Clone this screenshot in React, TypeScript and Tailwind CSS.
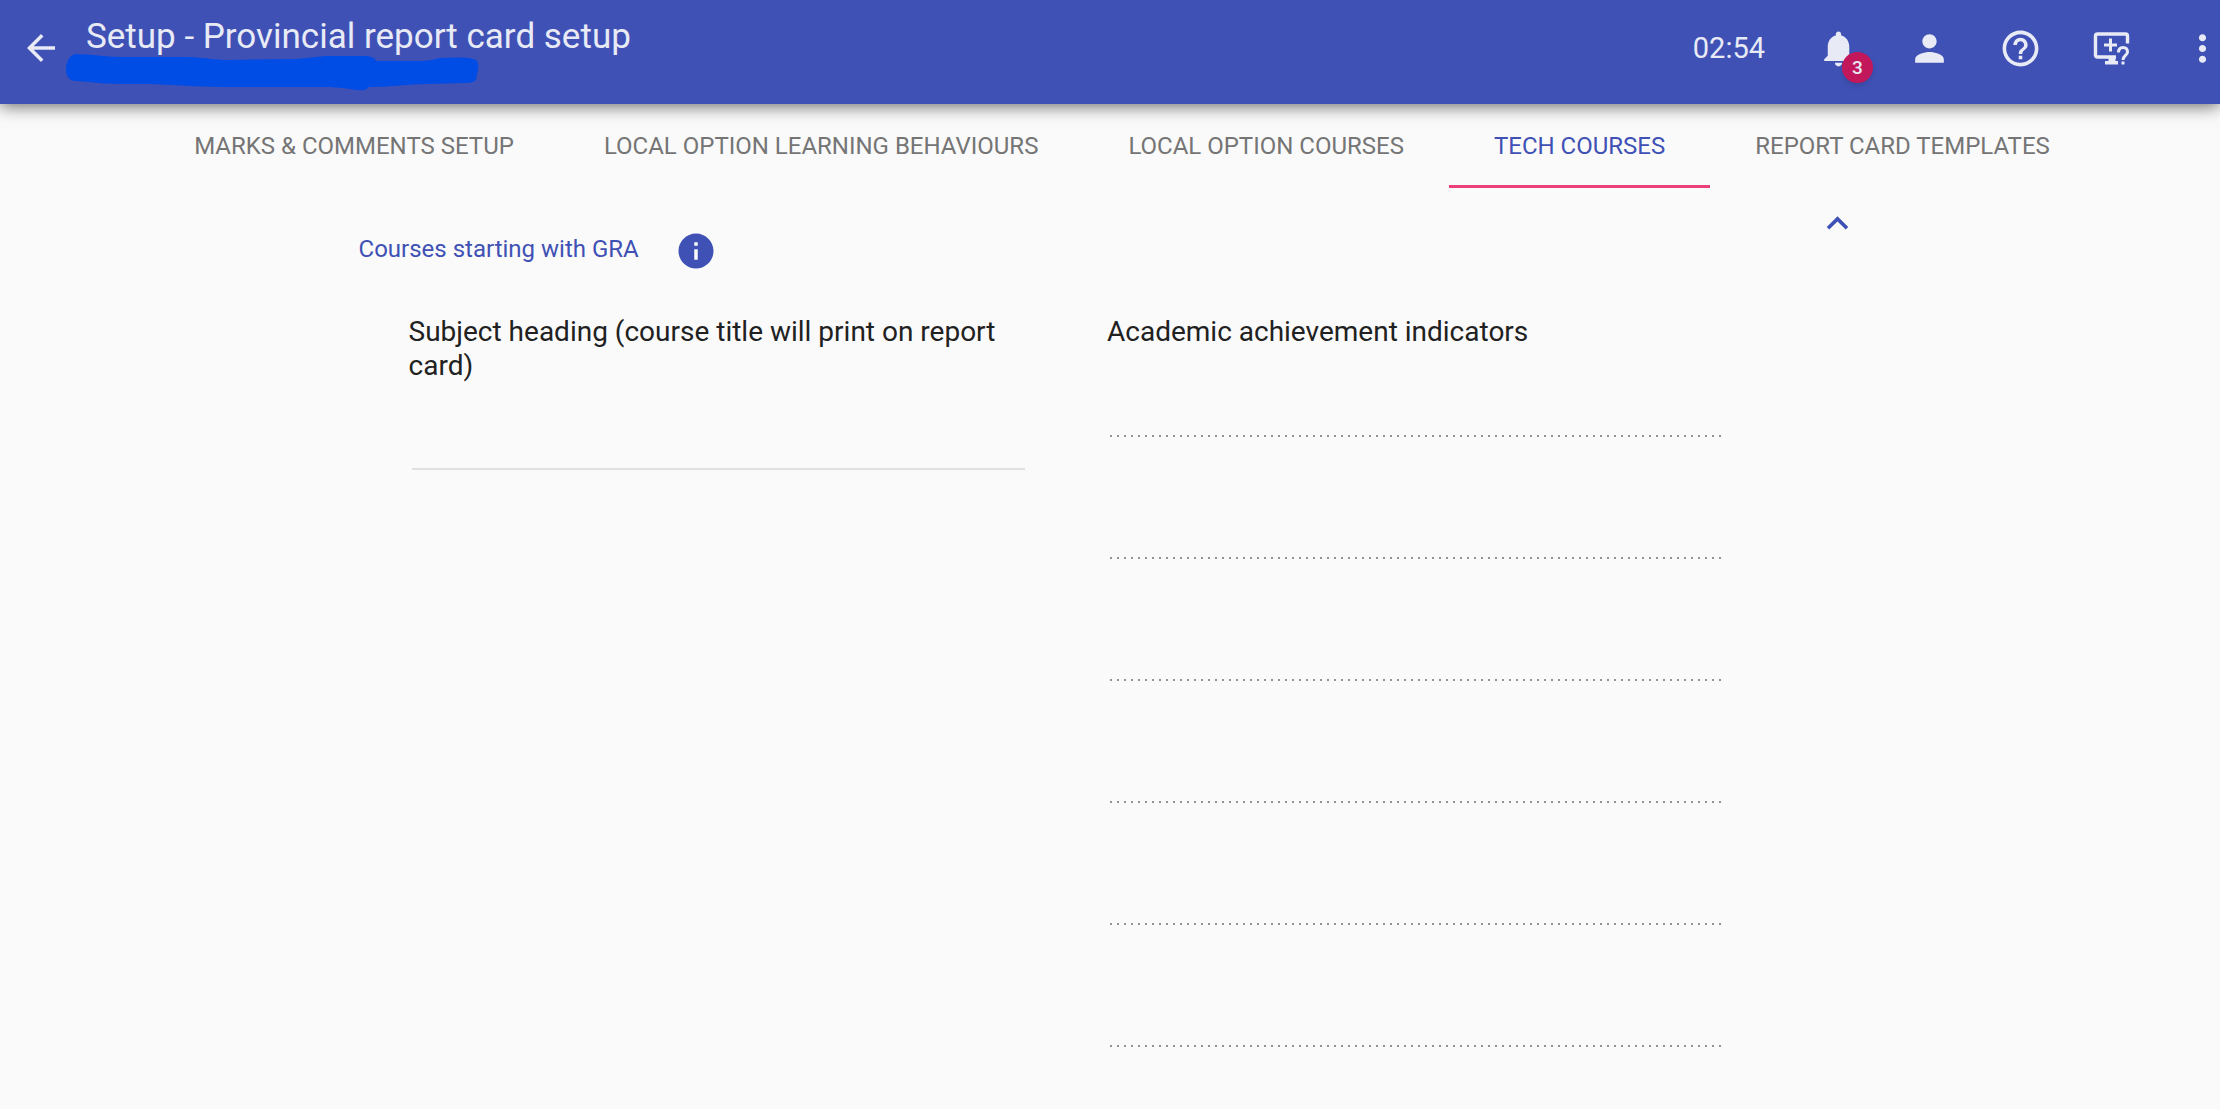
import type { ReactNode } from "react";

function Icon({ children, className }: { children: ReactNode; className: string }) {
  return (
    <svg viewBox="0 0 24 24" fill="currentColor" aria-hidden="true" className={className}>
      {children}
    </svg>
  );
}

const tabs = [
  "Marks & Comments Setup",
  "Local Option Learning Behaviours",
  "Local Option Courses",
  "Tech Courses",
  "Report Card Templates",
];

const indicators = [1, 2, 3, 4, 5, 6];

export default function App() {
  return (
    <div className="h-screen overflow-hidden bg-[#fafafa] font-[Roboto,sans-serif] text-[#212121]">
      <header className="relative flex h-[104px] items-center bg-[#3f51b5] pb-[8px] pl-[20px] text-[#e8eaf6] shadow-[0_2px_16px_rgba(0,0,0,0.6)]">
        <button type="button" aria-label="Back" className="shrink-0">
          <Icon className="size-[42px]">
            <path d="M20 11H7.83l5.59-5.59L12 4l-8 8 8 8 1.41-1.41L7.83 13H20v-2z" />
          </Icon>
        </button>
        <div className="relative ml-6 h-[96px] flex-1 pt-[15px]">
          <h1 className="text-[35px] leading-[44px] font-normal">Setup - Provincial report card setup</h1>
          <svg viewBox="66 52 414 40" className="absolute top-[52px] left-[-20px] h-[40px] w-[414px]" aria-hidden="true">
            <path
              fill="#004de6"
              d="M76 54C68 55 66 64 66 70C66 77 70 81 76 81L90 82C105 84 120 84 140 84C170 84 190 87 225 87L330 87C345 88 350 89 357 90C363 91 368 89 369 87C395 87 405 84 430 84L465 83C474 83 477 81 477 74C479 68 479 63 476 60C472 57 455 57 440 58C432 60 428 61 420 61L376 61C375 57 370 56 362 56L325 56C310 57 305 59 290 59L225 60C205 59 200 57 185 57L120 57C105 57 92 54 76 54Z"
            />
          </svg>
        </div>
        <div className="flex shrink-0 items-center">
          <time className="mr-[52px] text-[29px] leading-[36px]">02:54</time>
          <button type="button" aria-label="Notifications, 3 unread" className="relative mr-[48px]">
            <Icon className="size-[43px]">
              <path d="M12 22c1.1 0 2-.9 2-2h-4c0 1.1.89 2 2 2zm6-6v-5c0-3.07-1.64-5.64-4.5-6.32V4c0-.83-.67-1.5-1.5-1.5s-1.5.67-1.5 1.5v.68C7.63 5.36 6 7.92 6 11v5l-2 2v1h16v-1l-2-2z" />
            </Icon>
            <span className="absolute top-[25px] left-[25px] grid size-[31px] place-items-center rounded-full bg-[#c2185b] text-[19px] leading-none font-medium shadow-md">
              3
            </span>
          </button>
          <button type="button" aria-label="Account" className="mr-[48px]">
            <Icon className="size-[43px]">
              <path d="M12 12c2.21 0 4-1.79 4-4s-1.79-4-4-4-4 1.79-4 4 1.79 4 4 4zm0 2c-2.67 0-8 1.34-8 4v2h16v-2c0-2.66-5.33-4-8-4z" />
            </Icon>
          </button>
          <button type="button" aria-label="Help" className="mr-[48px]">
            <Icon className="size-[43px]">
              <path d="M11 18h2v-2h-2v2zm1-16C6.48 2 2 6.48 2 12s4.48 10 10 10 10-4.48 10-10S17.52 2 12 2zm0 18c-4.41 0-8-3.59-8-8s3.59-8 8-8 8 3.59 8 8-3.59 8-8 8zm0-14c-2.21 0-4 1.79-4 4h2c0-1.1.9-2 2-2s2 .9 2 2c0 2-3 1.75-3 5h2c0-2.25 3-2.5 3-5 0-2.21-1.79-4-4-4z" />
            </Icon>
          </button>
          <button type="button" aria-label="Remote support" className="mr-[48px]">
            <svg viewBox="0 0 43 43" fill="none" stroke="currentColor" strokeWidth="3.4" className="size-[43px]" aria-hidden="true">
              <path d="M26 30H7.500Q5.500 30 5.500 28V9Q5.500 7 7.500 7H35.500Q37.500 7 37.500 9V16.500" />
              <path d="M20.500 11.500V24.500M14 18H27" strokeWidth="3" />
              <path d="M18.500 30H25.500V34H28V37.500H15V34H18.500Z" fill="currentColor" stroke="none" />
              <path d="M28.500 25.500Q28.500 20.500 33 20.500Q37.500 20.500 37.500 25C37.500 28.500 33 28.500 33 33" strokeWidth="3" />
              <path d="M31.500 34.500H34.500V37.500H31.500Z" fill="currentColor" stroke="none" />
            </svg>
          </button>
          <button type="button" aria-label="More options" className="-mr-[4px]">
            <Icon className="size-[43px]">
              <path d="M12 8c1.1 0 2-.9 2-2s-.9-2-2-2-2 .9-2 2 .9 2 2 2zm0 2c-1.100 0-2 .9-2 2s.9 2 2 2 2-.9 2-2-.9-2-2-2zm0 6c-1.100 0-2 .9-2 2s.9 2 2 2 2-.9 2-2-.9-2-2-2z" />
            </Icon>
          </button>
        </div>
      </header>

      <nav role="tablist" aria-label="Report card setup" className="flex h-[84px] justify-center pl-[24px]">
        {tabs.map((tab) => (
          <button
            key={tab}
            type="button"
            role="tab"
            aria-selected={tab === "Tech Courses"}
            className="border-b-[3px] border-transparent px-[45px] pt-[2px] text-[24px] leading-[32px] whitespace-nowrap text-[#757575] uppercase aria-selected:border-[#ec407a] aria-selected:text-[#3f51b5]"
          >
            {tab}
          </button>
        ))}
      </nav>

      <main className="mx-auto w-[67.7%]">
        <div className="flex items-start justify-between pr-[2px]">
          <div className="flex items-center gap-[36px] pt-[40px]">
            <h2 className="pb-[2px] text-[24px] leading-[43px] font-normal text-[#3f51b5]">Courses starting with GRA</h2>
            <button type="button" aria-label="About these courses" className="text-[#3f51b5]">
              <Icon className="size-[42px]">
                <path d="M12 2C6.480 2 2 6.480 2 12s4.480 10 10 10 10-4.480 10-10S17.520 2 12 2zm1 15h-2v-6h2v6zm0-8h-2V7h2v2z" />
              </Icon>
            </button>
          </div>
          <button type="button" aria-label="Collapse section" className="mt-[14px] text-[#3f51b5]">
            <Icon className="size-[43px]">
              <path d="M12 8l-6 6 1.410 1.410L12 10.830l4.590 4.580L18 14z" />
            </Icon>
          </button>
        </div>

        <div className="flex gap-[82px] pt-[42px] pr-[138px] pl-[50px]">
          <section className="flex-1">
            <label htmlFor="subject" className="block text-[28px] leading-[34px]">
              Subject heading (course title will print on report card)
            </label>
            <div className="pt-[43px] pl-[3px]">
              <input
                id="subject"
                type="text"
                className="block h-[44px] w-full border-b-2 border-[#e0e0e0] bg-transparent text-[28px] outline-none"
              />
            </div>
          </section>
          <section className="flex-1">
            <h3 className="text-[28px] leading-[34px] font-normal">Academic achievement indicators</h3>
            <div className="flex flex-col gap-[78px] pt-[44px] pl-[3px]">
              {indicators.map((n) => (
                <input
                  key={n}
                  type="text"
                  disabled
                  aria-label={`Academic achievement indicator ${n}`}
                  className="block h-[44px] w-full bg-transparent bg-[linear-gradient(to_right,#949494_2px,transparent_2px)] bg-[length:7px_2px] bg-bottom-left bg-repeat-x text-[28px]"
                />
              ))}
            </div>
          </section>
        </div>
      </main>
    </div>
  );
}
